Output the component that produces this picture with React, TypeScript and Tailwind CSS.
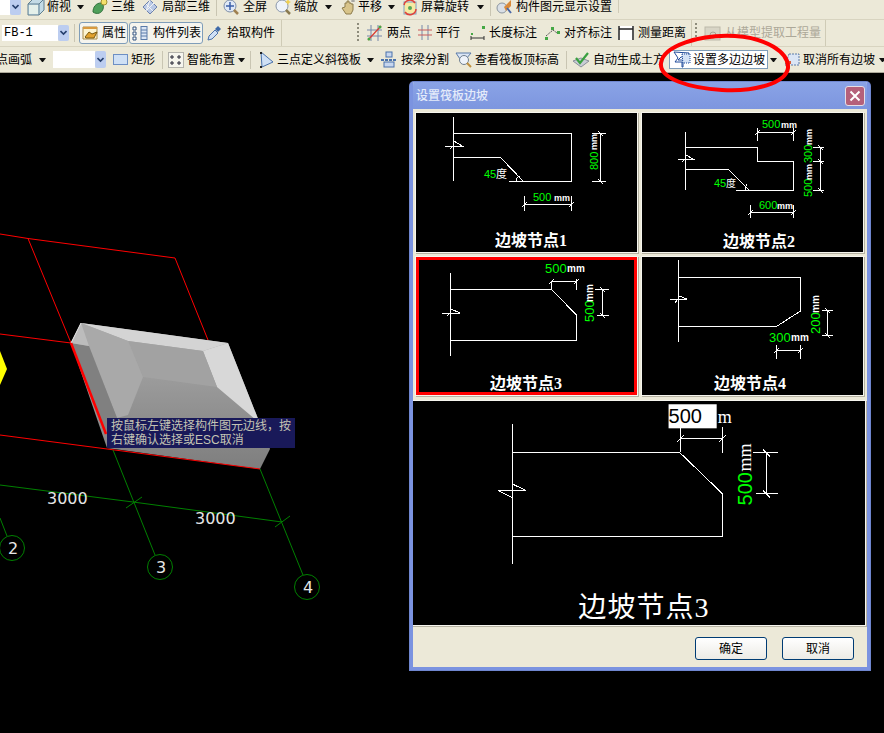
import type { ReactNode } from "react";
import clsx from "clsx";

const Ico = ({ children, w = 16 }: { children: ReactNode; w?: number }) => (
  <svg width={w} height={16} viewBox={`0 0 ${w} 16`} className="shrink-0 overflow-visible">
    {children}
  </svg>
);

const Lens = () => (
  <>
    <circle cx="7" cy="7" r="6" fill="#dfe8f5" stroke="#7f8fa8" />
    <path d="M11 11l4 4" stroke="#a08050" strokeWidth="2.5" />
  </>
);

const icons: Record<string, ReactNode> = {
  cube: (
    <Ico w={18}>
      <path d="M1 5l5-5h11v11l-5 5H1z" fill="#c3dbe6" stroke="#5f7f90" />
      <path d="M1 5h11v11M12 5l5-5" fill="none" stroke="#5f7f90" />
      <path d="M2 6h9v9H2z" fill="#e4f0ea" />
    </Ico>
  ),
  view3d: (
    <Ico>
      <path d="M1 13c0-5 3-9 8-9 2 0 3 3 2 6-1 4-6 6-10 3z" fill="#4f9f5a" stroke="#2f6f3a" />
      <circle cx="12" cy="3" r="3" fill="#f3e06a" stroke="#a09030" />
    </Ico>
  ),
  part3d: (
    <Ico>
      <path d="M1 8l7-7 7 7-7 7z" fill="#b9c9e6" stroke="#6d82ad" />
      <path d="M4 5l7 7M8 1l-4 11M5 11l7-7" stroke="#f4f4f4" fill="none" />
    </Ico>
  ),
  full: (
    <Ico>
      <Lens />
      <path d="M7 3v8M3 7h8" stroke="#3c5fa8" strokeWidth="1.5" />
    </Ico>
  ),
  zoom: (
    <Ico>
      <circle cx="7" cy="7" r="6" fill="#eef3fa" stroke="#8a97ab" />
      <path d="M11 11l4 4" stroke="#8a7a50" strokeWidth="2.5" />
      <path d="M13 0l1 2 2 1-2 1-1 2-1-2-2-1 2-1z" fill="#f0d050" />
    </Ico>
  ),
  pan: (
    <Ico>
      <path d="M2 9l3-1V4h2V2h2v2h2v1h2v6l-2 4H6z" fill="#d8c48a" stroke="#8d7c4c" />
      <path d="M13 0v3M11 2h4" stroke="#909090" />
    </Ico>
  ),
  rotate: (
    <Ico>
      <rect x="2" y="3" width="12" height="12" fill="#f7e9a2" stroke="#7fa0c0" />
      <path d="M2 6a6 6 0 0 1 11-2M14 10a6 6 0 0 1-11 3" fill="none" stroke="#e0403a" strokeWidth="1.5" />
      <circle cx="8" cy="9" r="2" fill="#57a85a" />
    </Ico>
  ),
  display: (
    <Ico>
      <circle cx="6" cy="9" r="5" fill="#d9dfe6" stroke="#8c96a0" />
      <path d="M8 8l7-7v6l-5 5z" fill="#d98a3a" />
      <path d="M11 9l4 5" stroke="#4a68a8" strokeWidth="2" />
    </Ico>
  ),
  attr: (
    <Ico>
      <path d="M1 2h14v12H1z" fill="#fdf4d0" stroke="#a88a4a" />
      <path d="M1 2h14v2H1z" fill="#d99a40" />
      <path d="M3 12l4-5 3 2 5-2-3 6H4z" fill="#e2a12e" stroke="#7a5a10" />
    </Ico>
  ),
  list: (
    <Ico w={15}>
      <path d="M0 2h3v3H0zM0 7h3v3H0zM0 12h3v3H0z" fill="#fff" stroke="#33527f" />
      <rect x="8" y="1.5" width="6" height="13" fill="#dbe6f5" stroke="#5a7aa8" />
      <path d="M8 5h6M8 8h6M8 11h6" stroke="#5a7aa8" />
    </Ico>
  ),
  pick: (
    <Ico w={15}>
      <path d="M1 15l1-4 6-6 3 3-6 6z" fill="#cfe0f5" stroke="#4a72ac" />
      <path d="M9 3l2-2 3 3-2 2-1 1-3-3z" fill="#3f6aa8" />
    </Ico>
  ),
  twoPt: (
    <Ico w={15}>
      <path d="M4 0v16M11 0v16M0 5h15M0 11h15" stroke="#7788aa" fill="none" />
      <path d="M1 15L14 1" stroke="#d93a30" strokeWidth="1.2" />
      <circle cx="2" cy="14" r="1.5" fill="#45a845" />
      <circle cx="13" cy="2" r="1.5" fill="#45a845" />
    </Ico>
  ),
  parallel: (
    <Ico w={14}>
      <path d="M4 0v15M10 0v15" stroke="#7788aa" />
      <path d="M0 5h14M0 10h14" stroke="#c95a5a" />
    </Ico>
  ),
  lenDim: (
    <Ico w={15}>
      <path d="M1 11v4M14 11v4M1 13h13" stroke="#333" fill="none" />
      <rect x="1" y="8" width="2" height="2" fill="#45a845" />
      <rect x="12" y="1" width="3" height="3" fill="#45a845" />
    </Ico>
  ),
  alignDim: (
    <Ico>
      <path d="M2 11L9 5l4 3" stroke="#555" fill="none" strokeDasharray="2 1" />
      <rect x="1" y="12" width="3" height="3" fill="#45a845" />
      <rect x="7" y="2" width="3" height="3" fill="#45a845" />
      <rect x="13" y="6" width="3" height="3" fill="#45a845" />
    </Ico>
  ),
  measure: (
    <Ico>
      <rect x="0" y="1" width="16" height="14" fill="#fff" />
      <path d="M1 1v14M15 1v14M1 4h14" stroke="#222" fill="none" strokeWidth="1.5" />
    </Ico>
  ),
  extract: (
    <Ico>
      <rect x="1" y="2" width="15" height="13" fill="#d8d5c6" stroke="#bcb9a9" />
      <circle cx="9" cy="10" r="3" fill="none" stroke="#a8a596" />
    </Ico>
  ),
  rect: (
    <Ico w={15}>
      <rect x="0.5" y="2.5" width="14" height="10" fill="#cfe0f5" stroke="#6d8fc4" />
    </Ico>
  ),
  smart: (
    <Ico>
      <rect x="0.5" y="0.5" width="15" height="15" fill="#f6f5ee" stroke="#777" strokeDasharray="1 1" />
      <path d="M4 3v4M2 5h4M11 3v4M9 5h4M4 9v4M2 11h4M11 9v4M9 11h4" stroke="#223" />
    </Ico>
  ),
  tri: (
    <Ico w={15}>
      <path d="M2 0l12 10-11 5z" fill="#cfe0f5" stroke="#4a72ac" />
      <rect x="1" y="0" width="2" height="2" fill="#222" />
      <rect x="1" y="14" width="2" height="2" fill="#222" />
    </Ico>
  ),
  beam: (
    <Ico>
      <rect x="5" y="0" width="6" height="5" fill="#c7d6ee" stroke="#4a72ac" />
      <path d="M0 8h16" stroke="#4a72ac" strokeWidth="2" strokeDasharray="3 1" />
      <rect x="3" y="10" width="10" height="5" fill="#c7d6ee" stroke="#4a72ac" />
    </Ico>
  ),
  inspect: (
    <Ico w={15}>
      <path d="M0 1h15l-5 6H4z" fill="#dbe6f5" stroke="#5a7aa8" />
      <circle cx="8" cy="8" r="4.5" fill="#eef3fa" stroke="#6f7f90" />
      <path d="M11 11l4 4" stroke="#c09040" strokeWidth="2" />
    </Ico>
  ),
  auto: (
    <Ico>
      <path d="M0 9l8 6 8-6-8-3z" fill="#c9cdd6" stroke="#8a8f9a" />
      <path d="M3 6l4 5 8-10" fill="none" stroke="#3aa040" strokeWidth="2.2" />
    </Ico>
  ),
  slope: (
    <Ico>
      <path d="M0 0l4 6-3 4h7v5h1V8H4l3-3h8V1z" fill="#fff" stroke="#1f4a9a" />
      <path d="M8 2h8v9H9z" fill="#d4e2f5" stroke="#1f4a9a" strokeDasharray="1 1" />
    </Ico>
  ),
  cancel: (
    <Ico>
      <path d="M5 2h10v11H1z" fill="#dbe6f5" stroke="#5a7aa8" strokeDasharray="2 1" />
      <rect x="1" y="7" width="3" height="4" fill="#e0a020" />
      <rect x="4" y="9" width="3" height="3" fill="#d9603a" />
    </Ico>
  ),
};

const Tool = ({ icon, label, className, disabled }: { icon?: string; label: string; className?: string; disabled?: boolean }) => (
  <div className={clsx("flex shrink-0 items-center", className)}>
    {icon && icons[icon]}
    <span className={clsx("whitespace-nowrap text-[12px] leading-[16px]", disabled ? "text-[#aca899]" : "text-black")}>{label}</span>
  </div>
);

const Arrow = ({ className }: { className?: string }) => (
  <div className={clsx("h-0 w-[7px] shrink-0 border-x-[3.5px] border-t-[4px] border-x-transparent border-t-[#111]", className)} />
);

const Sep = ({ className }: { className?: string }) => <div className={clsx("h-[18px] w-px shrink-0 bg-[#c9c5b2]", className)} />;

const ComboBtn = ({ className }: { className?: string }) => (
  <div className={clsx("flex w-[11px] shrink-0 items-center justify-center rounded-[2px] bg-[#bccdf0]", className)}>
    <svg width="7" height="6" viewBox="0 0 7 6">
      <path d="M0.5 1l3 3 3-3" fill="none" stroke="#27406e" strokeWidth="1.6" />
    </svg>
  </div>
);

const Grip = ({ className }: { className?: string }) => (
  <div className={clsx("h-[20px] w-[2px] shrink-0 bg-[repeating-linear-gradient(to_bottom,#8e8c7c_0,#8e8c7c_2px,transparent_2px,transparent_4px)]", className)} />
);

const Toolbars = () => (
  <div className="shrink-0 bg-[#ece9d8]">
    <div className="flex h-[20px] items-center overflow-hidden border-b border-[#d8d4c0] pb-[6px]">
      <div className="flex h-[16px] w-[10px] shrink-0 bg-white" />
      <ComboBtn className="h-[16px]" />
      <Tool icon="cube" label="俯视" className="ml-[6px] gap-[2px]" />
      <Arrow className="ml-[6px]" />
      <Tool icon="view3d" label="三维" className="ml-[8px] gap-[3px]" />
      <Tool icon="part3d" label="局部三维" className="ml-[7px] gap-[4px]" />
      <Sep className="ml-[6px]" />
      <Tool icon="full" label="全屏" className="ml-[6px] gap-[4px]" />
      <Tool icon="zoom" label="缩放" className="ml-[8px] gap-[3px]" />
      <Arrow className="ml-[7px]" />
      <Tool icon="pan" label="平移" className="ml-[8px] gap-[2px]" />
      <Arrow className="ml-[6px]" />
      <Tool icon="rotate" label="屏幕旋转" className="ml-[7px] gap-[3px]" />
      <Arrow className="ml-[8px]" />
      <Sep className="ml-[6px]" />
      <Tool icon="display" label="构件图元显示设置" className="ml-[5px] gap-[4px]" />
      <div className="ml-[6px] h-full w-px bg-[#d0ccb8]" />
    </div>

    <div className="flex h-[27px] items-center border-b border-[#d8d4c0]">
      <div className="ml-[2px] flex h-[16px] w-[56px] shrink-0 items-center bg-white pl-[2px] font-['Liberation_Mono',monospace] text-[12px] text-black">FB-1</div>
      <ComboBtn className="h-[16px]" />
      <Sep className="ml-[5px]" />
      <div className="ml-[4px] flex h-[22px] w-[49px] shrink-0 items-center gap-[4px] rounded-[3px] border border-[#7f9db9] bg-[#f5f4ee] pl-[2px] text-[12px] text-black">
        {icons.attr}
        <span>属性</span>
      </div>
      <div className="ml-px flex h-[22px] w-[74px] shrink-0 items-center gap-[5px] rounded-[3px] border border-[#7f9db9] bg-[#f5f4ee] pl-[3px] text-[12px] text-black">
        {icons.list}
        <span className="whitespace-nowrap">构件列表</span>
      </div>
      <Tool icon="pick" label="拾取构件" className="ml-[4px] gap-[5px]" />
      <div className="ml-[6px] h-full w-px bg-[#cfcbb6]" />
      <Grip className="ml-[75px]" />
      <Tool icon="twoPt" label="两点" className="ml-[8px] gap-[5px]" />
      <Tool icon="parallel" label="平行" className="ml-[7px] gap-[4px]" />
      <Tool icon="lenDim" label="长度标注" className="ml-[10px] gap-[4px]" />
      <Tool icon="alignDim" label="对齐标注" className="ml-[7px] gap-[4px]" />
      <Tool icon="measure" label="测量距离" className="ml-[6px] gap-[4px]" />
      <div className="ml-[5px] h-full w-px bg-[#cfcbb6]" />
      <Grip className="ml-[3px]" />
      <Tool icon="extract" label="从模型提取工程量" className="ml-[7px] gap-[5px]" disabled />
      <div className="ml-[4px] h-full w-px bg-[#cfcbb6]" />
    </div>

    <div className="flex h-[26px] items-center overflow-hidden border-b border-[#aca899]">
      <Tool label="点画弧" className="-ml-[4px]" />
      <Arrow className="ml-[7px]" />
      <div className="ml-[7px] flex h-[17px] w-[42px] shrink-0 bg-white" />
      <ComboBtn className="h-[17px]" />
      <Tool icon="rect" label="矩形" className="ml-[7px] gap-[3px]" />
      <Sep className="ml-[7px]" />
      <Tool icon="smart" label="智能布置" className="ml-[5px] gap-[3px]" />
      <Arrow className="ml-[3px]" />
      <Sep className="ml-[5px]" />
      <Tool icon="tri" label="三点定义斜筏板" className="ml-[8px] gap-[3px]" />
      <Arrow className="ml-[6px]" />
      <Tool icon="beam" label="按梁分割" className="ml-[7px] gap-[4px]" />
      <Tool icon="inspect" label="查看筏板顶标高" className="ml-[7px] gap-[4px]" />
      <Sep className="ml-[7px]" />
      <Tool icon="auto" label="自动生成土方" className="ml-[6px] w-[92px] gap-[4px] overflow-hidden" />
      <div className="ml-[4px] flex h-[19px] w-[99px] shrink-0 items-center gap-[3px] border border-[#7f9db9] bg-white pl-[4px] text-[12px] text-black">
        {icons.slope}
        <span className="whitespace-nowrap">设置多边边坡</span>
      </div>
      <Arrow className="ml-[2px]" />
      <Tool icon="cancel" label="取消所有边坡" className="ml-[7px] gap-[3px]" />
      <Arrow className="ml-[4px]" />
    </div>
  </div>
);

const sansText = "font-['Liberation_Sans','Noto_Sans_CJK_SC',sans-serif]";
const titleText = "font-['Liberation_Serif','Noto_Sans_CJK_SC',serif] fill-white font-bold";

const Txt = ({ x, y, r, className, children }: { x: number; y: number; r?: boolean; className: string; children: ReactNode }) => (
  <text x={x} y={y} transform={r ? `rotate(-90 ${x} ${y})` : undefined} className={clsx(sansText, className)}>
    {children}
  </text>
);

const green = "fill-[#00ff00] text-[11px]";
const white = "fill-white text-[9px] font-bold";

const Lines = ({ d }: { d: string }) => <path d={d} fill="none" stroke="#fff" shapeRendering="crispEdges" />;

// each sketch uses page coordinates through its viewBox
const Sketches = {
  node1: (
    <svg viewBox="416 113 221 139" className="block h-full w-full">
      <Lines d="M453.5 117V181M453.5 133.5H571.5V181.5H509M523.5 181.5L500.5 157.5H453.5M445 146H462L454 141M453 146L450 149" />
      <Lines d="M516 181C516 178 518 176 520 176M600.5 133V181M592 133.5H606M592 181.5H606M524.5 204.5H571.5M524.5 196V211M571.5 196V211M522 207L527 202M569 207L574 202M598 131L603 136M598 179L603 184" />
      <Txt x={484} y={178} className={green}>45</Txt>
      <Txt x={496} y={178} className="fill-white text-[11px]">度</Txt>
      <Txt x={533} y={201} className={green}>500</Txt>
      <Txt x={554} y={201} className={white}>mm</Txt>
      <Txt x={598} y={170} r className={green}>800</Txt>
      <Txt x={597} y={150} r className={white}>mm</Txt>
      <text x={495} y={246} className={clsx(titleText, "text-[16px]")}>边坡节点1</text>
    </svg>
  ),
  node2: (
    <svg viewBox="642 113 221 139" className="block h-full w-full">
      <Lines d="M685.5 132V190M685.5 147.5H757.5V161.5H793.5V190.5H736M749.5 190.5L728.5 169.5H685.5M678 159H693L686 155M685 159L682 162" />
      <Lines d="M745 190C745 187 747 185 746 184M757.5 132.5H793.5M757.5 128V141M793.5 128V141M820.5 147.5V190.5M813 147.5H824M813 161.5H824M813 190.5H824M750.5 212.5H793.5M750.5 205V218M793.5 205V218M755 135L760 130M791 135L796 130M748 215L753 210M791 215L796 210M818 145L823 150M818 159L823 164M818 188L823 193" />
      <Txt x={714} y={187} className={green}>45</Txt>
      <Txt x={726} y={187} className="fill-white text-[10px]">度</Txt>
      <Txt x={762} y={128} className={green}>500</Txt>
      <Txt x={781} y={128} className={white}>mm</Txt>
      <Txt x={759} y={209} className={green}>600</Txt>
      <Txt x={777} y={209} className={white}>mm</Txt>
      <Txt x={812} y={197} r className={green}>500</Txt>
      <Txt x={812} y={180} r className={white}>mm</Txt>
      <Txt x={812} y={163} r className={green}>300</Txt>
      <Txt x={812} y={145} r className={white}>mm</Txt>
      <text x={723} y={247} className={clsx(titleText, "text-[16px]")}>边坡节点2</text>
    </svg>
  ),
  node3: (
    <svg viewBox="419 260 215 132" className="block h-full w-full">
      <Lines d="M450.5 273V356M450.5 289.5H551.5L576.5 315V340.5H450.5M442 313H460L451 309M450 313L447 316" />
      <Lines d="M551.5 281.5H576.5M551.5 281V289M576.5 279V290M602.5 289.5V315.5M595 289.5H609M597 315.5H609M549 284L554 279M574 284L579 279M600 287L605 292M600 313L605 318" />
      <Txt x={545} y={273} className="fill-[#00ff00] text-[13px]">500</Txt>
      <Txt x={567} y={272} className="fill-white text-[10px] font-bold">mm</Txt>
      <Txt x={594} y={322} r className="fill-[#00ff00] text-[13px]">500</Txt>
      <Txt x={593} y={302} r className="fill-white text-[10px] font-bold">mm</Txt>
      <text x={490} y={389} className={clsx(titleText, "text-[16px]")}>边坡节点3</text>
    </svg>
  ),
  node4: (
    <svg viewBox="642 257 221 138" className="block h-full w-full">
      <Lines d="M678.5 260V342M678.5 277.5H800.5V311L776.5 326.5H678.5M670 299H687L679 296M678 299L675 303" />
      <Lines d="M827.5 310.5V335M822 310.5H833M822 335H833M776.5 350.5H800.5M776.5 345V359M800.5 345V359M825 308L830 313M825 333L830 338M774 353L779 348M798 353L803 348" />
      <Txt x={769} y={342} className="fill-[#00ff00] text-[13px]">300</Txt>
      <Txt x={791} y={341} className="fill-white text-[10px] font-bold">mm</Txt>
      <Txt x={820} y={334} r className="fill-[#00ff00] text-[13px]">200</Txt>
      <Txt x={819} y={313} r className="fill-white text-[10px] font-bold">mm</Txt>
      <text x={714} y={389} className={clsx(titleText, "text-[16px]")}>边坡节点4</text>
    </svg>
  ),
  big: (
    <svg viewBox="414 402 451 223" className="block h-full w-full">
      <Lines d="M513.5 425V564M513.5 453.5H680.5L722.5 494V536.5H513.5M514 485L527 491H499L513 498" />
      <Lines d="M680.5 429V453M680.5 439.5H722.5M722.5 428V454M753 453.5H778M756 494.5H778M766.5 453.5V494.5M677 443L684 436M719 443L726 436M763 450L770 457M763 491L770 498" />
      <rect x={669} y={405} width={48} height={24} fill="#fff" />
      <text x={669} y={424} className={clsx(sansText, "fill-black text-[20px]")}>500</text>
      <text x={718} y={424} className="fill-white font-['Liberation_Serif',serif] text-[18px]">m</text>
      <text x={752} y={506} transform="rotate(-90 752 506)" className={clsx(sansText, "fill-[#00ff00] text-[20px]")}>500</text>
      <text x={751} y={472} transform="rotate(-90 751 472)" className="fill-white font-['Liberation_Serif',serif] text-[18px]">mm</text>
      <text x={579} y={617} className="fill-white font-['Liberation_Serif','Noto_Sans_CJK_SC',serif] text-[28px] tracking-[1px]">边坡节点3</text>
    </svg>
  ),
};

const Panel = ({ children, className }: { children: ReactNode; className?: string }) => (
  <div className={clsx("bg-black shadow-[0_0_0_1px_#f6f5ee,1px_1px_0_1px_#b5b2a2]", className)}>{children}</div>
);

const Dialog = () => (
  <div className="absolute left-[410px] top-[9px] flex h-[588px] w-[460px] flex-col overflow-hidden rounded-t-[4px] border-x-[3px] border-b-[3px] border-[#7b93e0] bg-[#ece9d8] shadow-[0_0_0_1px_#6f86cf]">
    <div className="-mx-[3px] flex h-[27px] shrink-0 items-center justify-between bg-gradient-to-b from-[#8aa3e6] to-[#7d96df] pl-[6px] pr-[5px]">
      <span className="text-[12px] font-medium text-[#e4ebfa]">设置筏板边坡</span>
      <div className="flex h-[20px] w-[20px] items-center justify-center rounded-[3px] border border-[#e6dfe6] bg-[#b5607a]">
        <svg width="12" height="12" viewBox="0 0 12 12">
          <path d="M1.5 1.5l9 9M10.5 1.5l-9 9" stroke="#fff" strokeWidth="2" />
        </svg>
      </div>
    </div>
    <div className="grid grid-cols-[221px_221px] gap-x-[5px] pl-[3px] pt-[4px]">
      <Panel className="h-[139px]">{Sketches.node1}</Panel>
      <Panel className="h-[139px]">{Sketches.node2}</Panel>
      <Panel className="mt-[5px] h-[138px] border-[3px] border-[#ff0000]">{Sketches.node3}</Panel>
      <Panel className="mt-[5px] h-[138px]">{Sketches.node4}</Panel>
    </div>
    <Panel className="mt-[6px] h-[224px] w-[452px]">{Sketches.big}</Panel>
    <div className="mr-[13px] mt-[12px] flex justify-end gap-[15px]">
      {["确定", "取消"].map((t) => (
        <button key={t} className="h-[23px] w-[72px] rounded-[3px] border border-[#003c74] bg-gradient-to-b from-white to-[#ecebe5] text-[12px] text-black">
          {t}
        </button>
      ))}
    </div>
  </div>
);

const Scene = () => (
  <svg viewBox="0 73 884 660" className="absolute inset-0 h-full w-full">
    <defs>
      <linearGradient id="under" x1="0" y1="0" x2="0" y2="1">
        <stop offset="0" stopColor="#adadad" />
        <stop offset="1" stopColor="#7e7e7e" />
      </linearGradient>
    </defs>
    <g stroke="#ff0000" fill="none">
      <path d="M0 234L28 238.5L175 258L208 340M28 238.5L71 343M0 334L71 343" />
    </g>
    <g stroke="#008000" fill="none">
      <path d="M0 485L133 502L282 522M113 450L155 555M260 469L303 575M0 518L7 536M126 508L142 497M275 527L290 516" />
      <circle cx="12" cy="548" r="12.5" />
      <circle cx="160" cy="567" r="12.5" />
      <circle cx="307" cy="587" r="12.5" />
    </g>
    <path d="M0 351L7 369L0 385z" fill="#ffff00" />
    <path d="M81 323L228 343L270 449L260 469L107 448L71 343z" fill="url(#under)" />
    <path d="M81 323L228 343L203 351L128 341z" fill="#d4d4d4" />
    <path d="M228 343L270 449L256 420L217 387L203 351z" fill="#d8d8d8" />
    <path d="M128 341L203 351L217 387L143 377z" fill="#a2a2a2" />
    <path d="M81 323L128 341L143 377L128 415L117 418L89 346z" fill="#a9a9a9" />
    <path d="M71 343L89 346L117 418L107 436z" fill="#808080" />
    <path d="M71 343L81 323L89 346z" fill="#bcbcbc" />
    <path d="M71 343L81 323" stroke="#e8e8e8" fill="none" />
    <path d="M71 343L106 434" stroke="#ff0000" strokeWidth="2.5" fill="none" />
    <path d="M0 435L260 469" stroke="#ff0000" fill="none" />
    <g className="fill-[#e6e6e6] font-['DejaVu_Sans',sans-serif] text-[16px]">
      <text x={47} y={504}>3000</text>
      <text x={195} y={524}>3000</text>
      <text x={8} y={554}>2</text>
      <text x={156} y={573}>3</text>
      <text x={303} y={593}>4</text>
    </g>
  </svg>
);

const App = () => (
  <div className="relative flex h-[733px] w-[884px] flex-col overflow-hidden bg-black font-['Liberation_Sans','Noto_Sans_CJK_SC',sans-serif]">
    <Toolbars />
    <div className="relative flex-1">
      <Scene />
      <div className="absolute left-[107px] top-[345px] w-[188px] bg-[#191959] px-[4px] py-px text-[12px] leading-[14px] text-[#c4c4b4]">
        按鼠标左键选择构件图元边线，按
        <br />
        右键确认选择或ESC取消
      </div>
      <Dialog />
    </div>
    {/* hand drawn highlight over the slope button */}
    <svg viewBox="0 0 884 733" className="pointer-events-none absolute inset-0 h-full w-full">
      <path d="M661 63C663 46 700 34 735 36C766 38 789 52 788 68C786 83 755 92 722 90C690 88 659 79 661 63z" fill="none" stroke="#ff0000" strokeWidth="4" />
    </svg>
  </div>
);

export default App;
